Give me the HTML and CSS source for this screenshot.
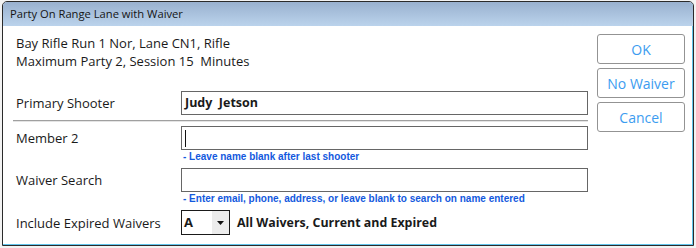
FILE: index.html
```html
<!DOCTYPE html>
<html lang="en">
<head>
  <meta charset="UTF-8">
  <title>Party On Range Lane with Waiver</title>
  <link rel="stylesheet" href="styles.css">
</head>
<body>
  <div class="window">
    <div class="titlebar">Party On Range Lane with Waiver</div>
    <div class="client">
      <div class="main">
        <div class="info">
          <div>Bay Rifle Run 1 Nor, Lane CN1, Rifle</div>
          <div>Maximum Party 2, Session 15&nbsp; Minutes</div>
        </div>

        <div class="row row-first">
          <label>Primary Shooter</label>
          <div class="field"><span class="value">Judy&nbsp; Jetson</span></div>
        </div>
        <div class="sep"></div>

        <div class="row">
          <label>Member 2</label>
          <div class="field"><span class="caret"></span></div>
        </div>
        <div class="hint">- Leave name blank after last shooter</div>

        <div class="row">
          <label>Waiver Search</label>
          <div class="field"></div>
        </div>
        <div class="hint">- Enter email, phone, address, or leave blank to search on name entered</div>

        <div class="row row-combo">
          <label>Include Expired Waivers</label>
          <div class="combo">
            <span class="combo-val">A</span>
            <span class="combo-btn">
              <svg width="7" height="4" viewBox="0 0 7 4"><path d="M0 0h7L3.5 4z" fill="#111"/></svg>
            </span>
          </div>
          <span class="combo-desc">All Waivers, Current and Expired</span>
        </div>
      </div>

      <div class="buttons">
        <button>OK</button>
        <button>No Waiver</button>
        <button>Cancel</button>
      </div>
    </div>
  </div>
</body>
</html>
```

FILE: styles.css
```css
body { margin: 0; background: #f3f3f3; font-family: "Open Sans", sans-serif; color: #1a1a1a; }
.window { margin: 1px 0 0 2px; width: 692px; height: 245px; box-sizing: border-box; border: 1px solid #2b2b2b; border-radius: 5px 5px 0 0; background: #fff; box-shadow: inset -1px -1px 0 #62c5ec; display: flex; flex-direction: column; overflow: hidden; }
.titlebar { flex: none; height: 24px; line-height: 24px; padding-left: 7px; font-size: 11.2px; color: #151515; background: linear-gradient(#99b1cf, #bbd3ec); }
.client { flex: 1; display: flex; }

.main { width: 572px; padding: 8px 0 0 13px; font-size: 13px; }
.info { line-height: 18px; margin-bottom: 21px; }
.row { display: flex; align-items: center; height: 24px; }
.row label { width: 165px; flex: none; }
.field { width: 407px; height: 24px; box-sizing: border-box; border: 1px solid #666; padding: 1px 0 0 3px; }
.value { font-weight: bold; font-size: 12.5px; }
.caret { display: block; width: 1px; height: 17px; margin-top: 2px; background: #111; }
.sep { width: 575px; height: 1px; margin: 5px 0 4px -3px; background: #a0a0a0; border-bottom: 1px solid #e4e4e4; }
.hint { height: 18px; line-height: 14px; padding-left: 167px; font-family: "Liberation Sans", Arial, sans-serif; font-size: 10px; font-weight: bold; color: #1359de; }

.row-combo { height: 25px; }
.combo { width: 49px; height: 25px; box-sizing: border-box; border: 1px solid #1a1a1a; display: flex; }
.combo-val { flex: 1; padding-left: 2px; font-weight: bold; font-size: 13px; line-height: 23px; }
.combo-btn { width: 17px; background: #ececec; display: flex; align-items: center; justify-content: center; }
.combo-desc { margin-left: 7px; font-weight: bold; font-size: 12.4px; }

.buttons { margin-left: 9px; padding-top: 8px; display: flex; flex-direction: column; gap: 4px; }
.buttons button { width: 88px; height: 30px; background: #fff; border: 1px solid #939393; border-radius: 3px; font-family: "Open Sans", sans-serif; font-size: 14px; color: #3c9cf0; padding: 0; }
```
